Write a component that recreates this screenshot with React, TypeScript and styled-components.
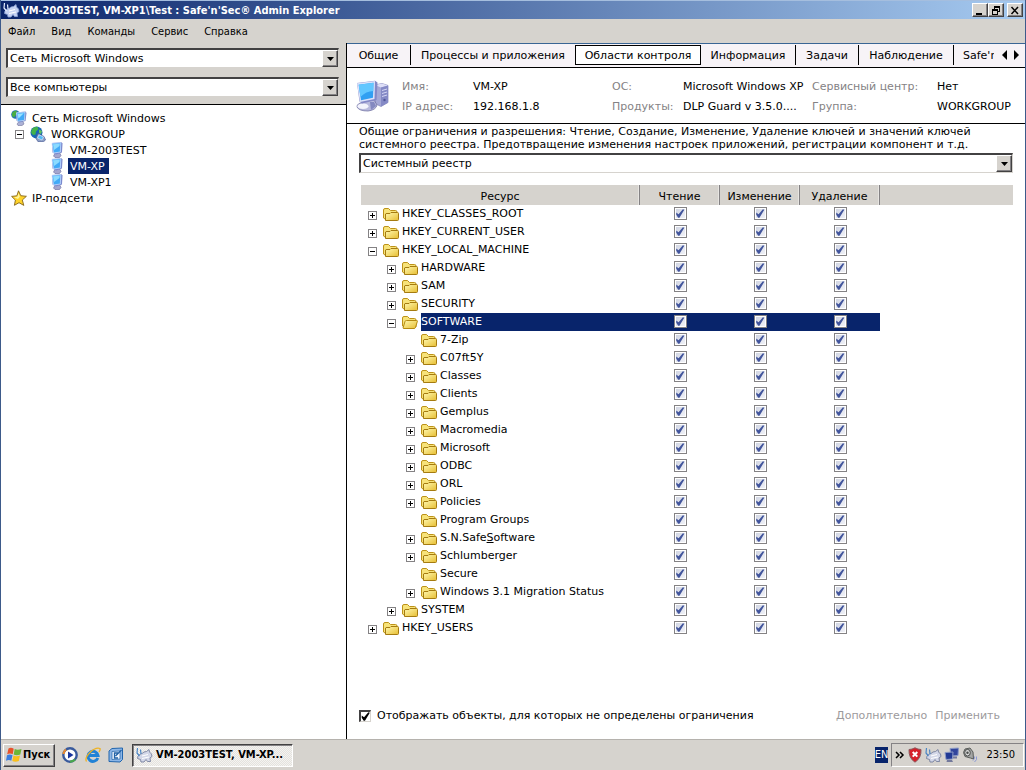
import React from "react";
import styled, { createGlobalStyle, css } from "styled-components";

const face = "#d6d3ce";
const navy = "#08246b";
const wide = '"DejaVu Sans", Verdana, sans-serif';
const narrow = '"DejaVu Sans Condensed", "DejaVu Sans", Tahoma, sans-serif';

const GlobalStyle = createGlobalStyle`
  *, *::before, *::after { box-sizing: border-box; }
  body { margin: 0; background: #fff; color: #000; font: 11px/16px ${wide}; }
  button, input, select { font: inherit; color: inherit; margin: 0; padding: 0; border: 0; border-radius: 0; background: none; }
  ul { list-style: none; margin: 0; padding: 0; }
  svg { display: block; flex: none; }
`;

const raised = css`
  background: ${face};
  border: 1px solid;
  border-color: #fff #424142 #424142 #fff;
  box-shadow: inset -1px -1px 0 #848284;
`;

const Desktop = styled.div`
  display: flex;
  flex-direction: column;
  min-height: 100vh;
  border: solid #3d5a8a;
  border-width: 0 1px;
  background: ${face};
`;

/* ---- window frame ---- */

const TitleBar = styled.header`
  display: flex;
  align-items: center;
  gap: 1px;
  height: 19px;
  padding: 0 2px;
  border-top: 1px solid #a5bede;
  background: linear-gradient(to right, #0a246a, #a6caf0);
  color: #fff;
`;

const Title = styled.h1`
  flex: 1;
  margin: 0;
  padding-top: 2px;
  font: bold 11px/16px ${narrow};
  white-space: nowrap;
  overflow: hidden;
`;

const WindowButton = styled.button<{ $apart?: boolean }>`
  ${raised}
  display: grid;
  place-items: center;
  width: 16px;
  height: 14px;
  margin-left: ${(p) => (p.$apart ? 2 : -1)}px;
`;

const MenuBar = styled.nav`
  display: flex;
  gap: 16px;
  height: 24px;
  padding: 2px 7px 0;
  font-family: ${narrow};
`;

const MenuItem = styled.button`
  height: 22px;
`;

const Body = styled.div`
  display: flex;
  flex: 1;
  background: #fff;
  border-bottom: 1px solid #b5b2ad;
`;

/* ---- drop-downs ---- */

const SelectBox = styled.div`
  display: flex;
  height: 20px;
  border: solid;
  border-width: 2px 1px 1px 2px;
  border-color: #424142 #d6d3ce #d6d3ce #424142;
  background: #fff;
`;

const Select = styled.select`
  flex: 1;
  min-width: 0;
  appearance: none;
  padding: 1px 0 0 2px;
  outline: none;
`;

const SelectArrow = styled.span`
  ${raised}
  display: grid;
  place-items: center;
  width: 16px;
`;

/* ---- left side ---- */

const Sidebar = styled.aside`
  display: flex;
  flex-direction: column;
  width: 346px;
  border-right: 1px solid #000;
`;

const Filters = styled.div`
  display: flex;
  flex-direction: column;
  gap: 9px;
  height: 62px;
  padding: 5px 7px 0 5px;
  background: ${face};
  border-bottom: 1px solid #000;
`;

const NetworkTree = styled.ul`
  padding: 5px 10px;
`;

const NetworkRow = styled.li<{ $indent: number }>`
  display: flex;
  align-items: center;
  gap: 3px;
  height: 16px;
  padding-left: ${(p) => p.$indent}px;
`;

const NetworkLabel = styled.span<{ $selected?: boolean }>`
  height: 16px;
  padding: 1px 4px 0 2px;
  background: ${(p) => (p.$selected ? navy : "transparent")};
  color: ${(p) => (p.$selected ? "#fff" : "#000")};
`;

const Expander = styled.button`
  flex: none;
  width: 9px;
  height: 9px;
  margin-right: 3px;
`;

/* ---- right side ---- */

const Main = styled.main`
  display: flex;
  flex-direction: column;
  flex: 1;
  min-width: 0;
`;

const TabBar = styled.div`
  display: flex;
  height: 25px;
  padding: 1px 0 2px;
  background: #f7f3f7;
  border-top: 1px solid #396594;
  border-bottom: 1px solid #000;
`;

const Tab = styled.button<{ $width: number; $active?: boolean; $plain?: boolean }>`
  flex: none;
  width: ${(p) => p.$width}px;
  padding-top: 1px;
  white-space: nowrap;
  border-right: ${(p) => (p.$plain ? 0 : 1)}px solid #000;
  ${(p) =>
    p.$active &&
    css`
      border: 1px solid #000;
      background: #fff;
    `}
`;

const ClippedTab = styled.button`
  flex: 1;
  min-width: 0;
  margin-left: 9px;
  padding-top: 1px;
  text-align: left;
  white-space: nowrap;
  overflow: hidden;
`;

const TabScroller = styled.div`
  display: flex;
  align-items: center;
  gap: 5px;
  padding: 0 5px 0 7px;
`;

const Info = styled.section`
  display: flex;
  align-items: center;
  gap: 13px;
  height: 56px;
  padding: 0 10px 0 9px;
  border-bottom: 1px solid #000;
`;

const InfoGrid = styled.dl`
  display: grid;
  grid-template-columns: 71px 139fr 71px 129fr 125px 78px;
  grid-auto-rows: 20px;
  flex: 1;
  margin: 0;
  line-height: 22px;
  white-space: nowrap;
`;

const InfoLabel = styled.dt`
  color: #848284;
`;

const InfoValue = styled.dd`
  margin: 0;
`;

const Content = styled.section`
  display: flex;
  flex-direction: column;
  flex: 1;
  padding: 1px 12px 15px;
`;

const Description = styled.p`
  margin: 0 0 2px;
  line-height: 13px;
`;

const Table = styled.table`
  width: calc(100% - 2px);
  margin: 12px 0 0 2px;
  table-layout: fixed;
  border-collapse: separate;
  border-spacing: 0;
`;

const HeadCell = styled.th<{ $width?: number }>`
  width: ${(p) => (p.$width ? `${p.$width}px` : "auto")};
  height: 20px;
  padding: 3px 0 0;
  font-weight: normal;
  background: ${face};
  border-right: ${(p) => (p.$width ? "1px solid #848284" : "0")};
  box-shadow: ${(p) => (p.$width ? "inset -1px 0 0 #e7e5e2" : "none")};
`;

const Cell = styled.td<{ $selected?: boolean }>`
  height: 18px;
  padding: 0;
  background: ${(p) => (p.$selected ? navy : "transparent")};
`;

const Resource = styled.div<{ $level: number }>`
  display: flex;
  align-items: center;
  height: 18px;
  padding-left: ${(p) => 7 + p.$level * 19}px;
`;

const ExpanderSlot = styled.span`
  display: flex;
  align-items: flex-end;
  width: 15px;
  height: 12px;
`;

const ResourceLabel = styled.span<{ $selected?: boolean }>`
  flex: 1;
  height: 18px;
  margin-left: 3px;
  padding-top: 1px;
  white-space: nowrap;
  background: ${(p) => (p.$selected ? navy : "transparent")};
  color: ${(p) => (p.$selected ? "#fff" : "#000")};
`;

const Check = styled.input.attrs({ type: "checkbox" })<{ $sunken?: boolean }>`
  display: block;
  flex: none;
  appearance: none;
  width: ${(p) => (p.$sunken ? 12 : 13)}px;
  height: ${(p) => (p.$sunken ? 12 : 13)}px;
  margin: ${(p) => (p.$sunken ? "0" : "0 auto")};
  border: 1px solid #848284;
  background: linear-gradient(135deg, #cdd2e0, #f4f5fa);
  box-shadow: inset 0 0 0 1px #fff;
  ${(p) =>
    p.$sunken &&
    css`
      border-width: 2px 1px 1px 2px;
      border-color: #424142 #d6d3ce #d6d3ce #424142;
      background: #fff;
    `}

  &:checked::after {
    content: "";
    display: block;
    width: 9px;
    height: 9px;
    margin: ${(p) => (p.$sunken ? "0" : "1px")};
    background: ${(p) => (p.$sunken ? "#000" : "#42559c")};
    clip-path: polygon(8% 38%, 34% 58%, 82% 2%, 98% 8%, 44% 96%, 30% 96%, 8% 64%);
  }
`;

const CheckHolder = styled.div`
  height: 18px;
  padding-top: 2px;
`;

const Footer = styled.div`
  display: flex;
  align-items: center;
  gap: 8px;
  margin-top: auto;
  padding-right: 13px;
`;

const ShowAll = styled.label`
  display: flex;
  align-items: center;
  gap: 6px;
  flex: 1;
`;

const FlatButton = styled.button`
  color: #9c9a9c;
`;

/* ---- taskbar ---- */

const Taskbar = styled.footer`
  display: flex;
  align-items: center;
  height: 30px;
  padding: 0 1px 0 2px;
  font-family: ${narrow};
`;

const StartButton = styled.button`
  ${raised}
  display: flex;
  align-items: center;
  gap: 1px;
  width: 52px;
  height: 23px;
  padding-left: 2px;
  font: bold 11px/16px ${narrow};
`;

const QuickLaunch = styled.div`
  display: flex;
  gap: 7px;
  padding: 0 8px 0 7px;
`;

const TaskButton = styled.button`
  display: flex;
  align-items: center;
  gap: 3px;
  width: 161px;
  height: 23px;
  padding-left: 3px;
  border: 1px solid;
  border-color: #424142 #fff #fff #424142;
  box-shadow: inset 1px 1px 0 #848284;
  background: repeating-conic-gradient(#e4e2de 0 25%, #f4f3f1 0 50%) 0 0 / 2px 2px;
  font: bold 11px/16px ${narrow};
  white-space: nowrap;
`;

const Language = styled.span`
  margin: 0 3px 0 auto;
  background: ${navy};
  color: #fff;
`;

const Tray = styled.div`
  display: flex;
  align-items: center;
  gap: 2px;
  height: 24px;
  padding: 0 8px 0 3px;
  border: 1px solid;
  border-color: #848284 #fff #fff #848284;
`;

const Clock = styled.time`
  margin-left: 6px;
`;

/* ---- drawings ---- */

const PlusMinus = ({ open }: { open?: boolean }) => (
  <svg width="9" height="9" viewBox="0 0 9 9" shapeRendering="crispEdges">
    <rect x="0.5" y="0.5" width="8" height="8" fill="#fff" stroke="#848284" />
    <path d={open ? "M2 4.5h5" : "M2 4.5h5M4.5 2v5"} stroke="#000" />
  </svg>
);

const DownArrow = () => (
  <svg width="7" height="4" viewBox="0 0 7 4">
    <path d="M0 0h7L3.5 4z" />
  </svg>
);

const Folder = ({ open }: { open?: boolean }) => (
  <svg width="16" height="16" viewBox="0 0 16 16">
    <defs>
      <linearGradient id="folderFront" x1="0" y1="0" x2="1" y2="1">
        <stop offset="0" stopColor="#fff9b0" />
        <stop offset="1" stopColor="#e7bd31" />
      </linearGradient>
    </defs>
    <path d="M.5 12V4Q.5 2.500 2 2.500h3.500L7.500 4.500h5Q14 4.500 14 6v7H2Z" fill="#f7e37a" stroke="#bd9218" />
    {open ? (
      <path d="M1 14 3 7.500Q3.300 6.500 4.500 6.500h10Q15.600 6.500 15.400 7.200L13.500 13.500Q13 14.500 12 14.500H2Q1 14.500 1 14Z" fill="url(#folderFront)" stroke="#b58a10" />
    ) : (
      <path d="M2.500 14.500V8Q2.500 7.500 4 7.500h3l1-1h6.500q1 0 1 1v6q0 1-1 1Z" fill="url(#folderFront)" stroke="#a57b10" />
    )}
  </svg>
);

const Monitor = () => (
  <svg width="16" height="16" viewBox="0 0 16 16">
    <path d="M6.500 10.500h4l1.500 3-1.500 2H6L4.500 14Z" fill="#a5a6ce" stroke="#63659c" strokeWidth=".6" />
    <path d="M3 1 12.500 .3 13.500 1.500 13 10.500 7 12.500 3.500 10.500Z" fill="#7b8ace" />
    <path d="M3 1.300 11.800 .8 11.300 10 4.500 11Z" fill="#42aaf7" stroke="#c6dbff" strokeWidth=".8" />
    <path d="M4 2.200 10.800 1.800 10.500 4 5 8Z" fill="#8cdbff" />
  </svg>
);

const NetworkRoot = () => (
  <svg width="16" height="16" viewBox="0 0 16 16">
    <circle cx="4.500" cy="4.500" r="4.300" fill="#2171b5" />
    <path d="M1 3Q3 0 6 .8L5.500 4 3 7.500 1 6Z" fill="#4aae42" />
    <path d="M8 11.500h4l1 2.500-2 1.500H7L6 14Z" fill="#adb2d6" stroke="#73759c" strokeWidth=".6" />
    <path d="M5 2.500 14.500 1.500 15.500 3 14.500 11 8 12.500 5.500 10.500Z" fill="#7386c6" />
    <path d="M5.500 2.800 14 2 13.500 10.300 6.500 11.300Z" fill="#42aaf7" stroke="#d6e3ff" strokeWidth=".7" />
    <path d="M6.500 3.700 12.800 3.200 7.500 8.500Z" fill="#9ce3ff" />
  </svg>
);

const Globe = () => (
  <svg width="16" height="16" viewBox="0 0 16 16">
    <circle cx="6.500" cy="6.500" r="6" fill="#1865b5" />
    <path d="M2 3Q4 .5 7.500.8L8.500 3 6 5.500 5.500 8.500 3 9 1 6.500Z" fill="#42b24a" />
    <path d="M9 3.500 12 5 11 8 9 7Z" fill="#63c35a" />
    <path d="M6 12.500 8 7.500l6 3 1.500 3.500-2 1.700H8Z" fill="#8c9ec6" stroke="#4a5d95" strokeWidth=".7" />
    <path d="M7.500 12 9 8.800 13.500 11 12 14Z" fill="#52baf7" stroke="#e7efff" strokeWidth=".6" />
  </svg>
);

const Star = () => (
  <svg width="16" height="16" viewBox="0 0 16 16">
    <path d="M7.500.8 9.800 5.700 15.400 6.300 11.300 10 12.800 15.400 8 12.700 3.400 15.300 4.400 10.100.600 6.400 5.900 5.800Z" fill="#ffd329" stroke="#84651a" strokeWidth=".9" />
    <path d="M7.500 3 8.900 6.700 7 9 3 7.200 6.400 6.700Z" fill="#fff59c" />
  </svg>
);

const ComputerLarge = () => (
  <svg width="33" height="32" viewBox="0 0 33 32">
    <path d="M19 5 26 3.500 32 5.500v17l-7 4-6-3Z" fill="#a5a8d6" stroke="#7b7fb8" strokeWidth=".7" />
    <path d="m19 5 7-1.500 6 2L25 7.500Z" fill="#dedff7" />
    <path d="M25 7.500 32 5.500v17l-7 4Z" fill="#858ac6" />
    <path d="M26 10.500 31 9M26 13.500 31 12M26 16.500 31 15" stroke="#d5d7f5" />
    <circle cx="28.500" cy="20" r="1.200" fill="#4f5699" />
    <path d="M10 20h8l3 5q-1 5-9 6-9 0-11-4 0-4 6-4.500Z" fill="#b9badd" stroke="#7375a5" strokeWidth=".8" />
    <ellipse cx="7" cy="26.300" rx="5.500" ry="2.800" fill="#f4f4fc" />
    <path d="M14 22h4l2 4-5 4Z" fill="#8489c0" />
    <path d="M1 3 19 .7 21.500 2.500 20.500 20 6 23.500 3.500 21.500Z" fill="#8488c6" />
    <path d="M1 3.200 19 1 18.500 19 4 22Z" fill="#dbe2fb" />
    <path d="M2.700 4.700 17.500 2.800 17 17.700 5 20.300Z" fill="#319ff2" />
    <path d="M2.700 4.700 17.500 2.800 17.300 11Q10 11 4.400 17Z" fill="#63c7ff" />
  </svg>
);

const Rhino = ({ light }: { light?: boolean }) => (
  <svg width="17" height="16" viewBox="0 0 17 16">
    <path
      d="M3.500 7.500 6 6.500 8 5 10.500 4.500 13 2.500 13.500 5 15.500 7 16 9.500 14 11 14.500 14.500H11.500L10 12.500 8 15H5L4.500 12.500 1.500 11.500 2 9Z"
      fill={light ? "#c6d3f2" : "#d3d7e8"}
      stroke={light ? "#8ca2d6" : "#6b7594"}
      strokeWidth=".8"
    />
    <path d="M6 9 12 7.500M6 11.500 13 10" stroke="#fff" />
    <path d="M1.500 1 1 6 3.500 9M4.500 2.500 5 7" fill="none" stroke={light ? "#e7efff" : "#4a86c6"} strokeWidth="1.200" />
  </svg>
);

const WindowsFlag = () => (
  <svg width="16" height="16" viewBox="0 0 16 16">
    <path d="M2.500 1.500Q5 0 7.700 1.700L6.700 7.200Q4 5.700 1.200 7.200Z" fill="#e7512a" />
    <path d="M8.700 2Q11.500 3.500 15.500 2L14.300 7.500Q10.500 9 7.700 7.500Z" fill="#6bb637" />
    <path d="M1 8.200Q4 6.700 6.500 8.200L5.300 13.700Q2.800 12.500 0 13.800Z" fill="#3a7de0" />
    <path d="M7.500 8.600Q10.500 10 14 8.500L12.800 14Q9.300 15.500 6.300 14Z" fill="#f9bf1c" />
  </svg>
);

const MediaPlayer = () => (
  <svg width="16" height="16" viewBox="0 0 16 16">
    <circle cx="8" cy="8" r="6.700" fill="#fff" stroke="#395a9c" strokeWidth="2.400" />
    <path d="M1.500 7A6.600 6.600 0 0 1 4 2.500" fill="none" stroke="#e78a31" strokeWidth="2.200" />
    <path d="M13 12.500A6.500 6.500 0 0 1 8 14.600" fill="none" stroke="#4aa84a" strokeWidth="2.200" />
    <path d="M6 4.500 11.500 8 6 11.500Z" fill="#18349c" />
  </svg>
);

const Explorer = () => (
  <svg width="16" height="16" viewBox="0 0 16 16">
    <path d="M12.800 11A5 5 0 1 1 13 8.500H4.500" fill="none" stroke="#2182d6" strokeWidth="3" />
    <path d="M1.500 14.500Q-.5 11 5 5.500T15 1.500Q15.500 3 14 5" fill="none" stroke="#efb221" strokeWidth="1.300" />
  </svg>
);

const ShowDesktop = () => (
  <svg width="16" height="16" viewBox="0 0 16 16">
    <path d="M1 4 4 1.500 14.500 1v11.500L12 15 1 14.500Z" fill="#8cb6e7" stroke="#2165ad" />
    <path d="M4 4.500 12 4v8L4 12.500Z" fill="#f3f8ff" stroke="#316dad" strokeWidth=".8" />
    <path d="M10 6H6.500V11H10M7.500 9 13.500 3" fill="none" stroke="#2161a5" strokeWidth="1.300" />
  </svg>
);

const Shield = () => (
  <svg width="16" height="16" viewBox="0 0 16 16">
    <path d="M8 .8Q11 2.500 14 2.500 14.500 11 8 15.200 1.500 11 2 2.500 5 2.500 8 .8Z" fill="#d6202a" stroke="#8c5a5e" />
    <path d="M5.700 5 10.300 9.600M10.300 5 5.700 9.600" stroke="#fff" strokeWidth="2" />
  </svg>
);

const NetworkTray = () => (
  <svg width="16" height="16" viewBox="0 0 16 16">
    <path d="M6 1.500 14.500 1 14 8.500 7 9Z" fill="#31459c" stroke="#8c9ac6" />
    <path d="M9 9.500h4v2H9Z" fill="#73799c" />
    <path d="M1 5.500 9 5 8.500 12 2 12.500Z" fill="#213994" stroke="#8c9ac6" />
    <path d="M3 13h5l1 2H2.500Z" fill="#73799c" />
  </svg>
);

const Speaker = () => (
  <svg width="16" height="16" viewBox="0 0 16 16">
    <path d="M3 2 8 1 11 5 11.500 12 8.500 11 3 9.500 1.500 5.500Z" fill="#a5a6a5" stroke="#5a5d5a" />
    <ellipse cx="5.500" cy="5.700" rx="2.800" ry="3.300" fill="#d6d7d6" stroke="#4a4d4a" />
    <circle cx="5.500" cy="5.700" r="1.200" fill="#4a4d4a" />
    <path d="M12.500 9.500Q13 11.500 11 13.500M14.500 9.500Q15.500 13 12.500 15" fill="none" stroke="#8c9ad6" />
  </svg>
);

/* ---- data ---- */

type Item = { name: React.ReactNode; key: string; level: number; state: "closed" | "open" | "leaf"; selected?: boolean };

const item = (key: string, level: number, state: Item["state"] = "closed", selected = false): Item => ({
  key,
  name: key,
  level,
  state,
  selected,
});

const items: Item[] = [
  item("HKEY_CLASSES_ROOT", 0),
  item("HKEY_CURRENT_USER", 0),
  item("HKEY_LOCAL_MACHINE", 0, "open"),
  item("HARDWARE", 1),
  item("SAM", 1),
  item("SECURITY", 1),
  item("SOFTWARE", 1, "open", true),
  item("7-Zip", 2, "leaf"),
  item("C07ft5Y", 2),
  item("Classes", 2),
  item("Clients", 2),
  item("Gemplus", 2),
  item("Macromedia", 2),
  item("Microsoft", 2),
  item("ODBC", 2),
  item("ORL", 2),
  item("Policies", 2),
  item("Program Groups", 2, "leaf"),
  { key: "S.N.SafeSoftware", name: <>S.N.Safe<u>S</u>oftware</>, level: 2, state: "closed" },
  item("Schlumberger", 2),
  item("Secure", 2, "leaf"),
  item("Windows 3.1 Migration Status", 2),
  item("SYSTEM", 1),
  item("HKEY_USERS", 0),
];

const rights = ["Чтение", "Изменение", "Удаление"];

function DropDown({ label, value }: { label: string; value: string }) {
  return (
    <SelectBox>
      <Select aria-label={label} defaultValue={value}>
        <option>{value}</option>
      </Select>
      <SelectArrow>
        <DownArrow />
      </SelectArrow>
    </SelectBox>
  );
}

export default function App() {
  return (
    <Desktop>
      <GlobalStyle />
      <TitleBar>
        <Rhino light />
        <Title>VM-2003TEST, VM-XP1\Test : Safe'n'Sec® Admin Explorer</Title>
        <WindowButton aria-label="Свернуть">
          <svg width="10" height="9" viewBox="0 0 10 9"><path d="M1 7h6v2H1z" /></svg>
        </WindowButton>
        <WindowButton aria-label="Восстановить">
          <svg width="10" height="9" viewBox="0 0 10 9" shapeRendering="crispEdges">
            <path d="M3 0h6v6H7V5h1V2H4v1H3zM1 3h6v6H1zM2 5v3h4V5z" fillRule="evenodd" />
          </svg>
        </WindowButton>
        <WindowButton $apart aria-label="Закрыть">
          <svg width="10" height="9" viewBox="0 0 10 9"><path d="M1.500 1 8 8M8 1 1.500 8" stroke="#000" strokeWidth="1.500" /></svg>
        </WindowButton>
      </TitleBar>
      <MenuBar>
        {["Файл", "Вид", "Команды", "Сервис", "Справка"].map((m) => (
          <MenuItem key={m}>{m}</MenuItem>
        ))}
      </MenuBar>
      <Body>
        <Sidebar>
          <Filters>
            <DropDown label="Сеть" value="Сеть Microsoft Windows" />
            <DropDown label="Компьютеры" value="Все компьютеры" />
          </Filters>
          <NetworkTree>
            <NetworkRow $indent={0}><NetworkRoot /><NetworkLabel>Сеть Microsoft Windows</NetworkLabel></NetworkRow>
            <NetworkRow $indent={4}>
              <Expander aria-label="WORKGROUP"><PlusMinus open /></Expander>
              <Globe /><NetworkLabel>WORKGROUP</NetworkLabel>
            </NetworkRow>
            <NetworkRow $indent={38}><Monitor /><NetworkLabel>VM-2003TEST</NetworkLabel></NetworkRow>
            <NetworkRow $indent={38}><Monitor /><NetworkLabel $selected>VM-XP</NetworkLabel></NetworkRow>
            <NetworkRow $indent={38}><Monitor /><NetworkLabel>VM-XP1</NetworkLabel></NetworkRow>
            <NetworkRow $indent={0}><Star /><NetworkLabel>IP-подсети</NetworkLabel></NetworkRow>
          </NetworkTree>
        </Sidebar>
        <Main>
          <TabBar>
            <Tab $width={64}>Общие</Tab>
            <Tab $width={164} $plain>Процессы и приложения</Tab>
            <Tab $width={126} $active>Области контроля</Tab>
            <Tab $width={95}>Информация</Tab>
            <Tab $width={63}>Задачи</Tab>
            <Tab $width={95}>Наблюдение</Tab>
            <ClippedTab>Safe'n'Sec</ClippedTab>
            <TabScroller>
              <button aria-label="Назад"><svg width="7" height="10" viewBox="0 0 7 10"><path d="M6 0v10L1 5z" /></svg></button>
              <button aria-label="Вперёд"><svg width="7" height="10" viewBox="0 0 7 10"><path d="M1 0v10l5-5z" /></svg></button>
            </TabScroller>
          </TabBar>
          <Info>
            <ComputerLarge />
            <InfoGrid>
              <InfoLabel>Имя:</InfoLabel><InfoValue>VM-XP</InfoValue>
              <InfoLabel>ОС:</InfoLabel><InfoValue>Microsoft Windows XP</InfoValue>
              <InfoLabel>Сервисный центр:</InfoLabel><InfoValue>Нет</InfoValue>
              <InfoLabel>IP адрес:</InfoLabel><InfoValue>192.168.1.8</InfoValue>
              <InfoLabel>Продукты:</InfoLabel><InfoValue>DLP Guard v 3.5.0....</InfoValue>
              <InfoLabel>Группа:</InfoLabel><InfoValue>WORKGROUP</InfoValue>
            </InfoGrid>
          </Info>
          <Content>
            <Description>
              Общие ограничения и разрешения: Чтение, Создание, Изменение, Удаление ключей и значений ключей
              системного реестра. Предотвращение изменения настроек приложений, регистрации компонент и т.д.
            </Description>
            <DropDown label="Область контроля" value="Системный реестр" />
            <Table>
              <thead>
                <tr>
                  <HeadCell $width={279}>Ресурс</HeadCell>
                  {rights.map((r) => <HeadCell key={r} $width={80}>{r}</HeadCell>)}
                  <HeadCell />
                </tr>
              </thead>
              <tbody>
                {items.map((it) => (
                  <tr key={it.key}>
                    <Cell>
                      <Resource $level={it.level}>
                        <ExpanderSlot>
                          {it.state !== "leaf" && (
                            <Expander aria-label={it.key}><PlusMinus open={it.state === "open"} /></Expander>
                          )}
                        </ExpanderSlot>
                        <Folder open={it.selected} />
                        <ResourceLabel $selected={it.selected}>{it.name}</ResourceLabel>
                      </Resource>
                    </Cell>
                    {rights.map((r) => (
                      <Cell key={r} $selected={it.selected}>
                        <CheckHolder>
                          <Check defaultChecked aria-label={`${it.key}: ${r}`} />
                        </CheckHolder>
                      </Cell>
                    ))}
                    <Cell />
                  </tr>
                ))}
              </tbody>
            </Table>
            <Footer>
              <ShowAll>
                <Check $sunken defaultChecked />
                Отображать объекты, для которых не определены ограничения
              </ShowAll>
              <FlatButton>Дополнительно</FlatButton>
              <FlatButton>Применить</FlatButton>
            </Footer>
          </Content>
        </Main>
      </Body>
      <Taskbar>
        <StartButton><WindowsFlag />Пуск</StartButton>
        <QuickLaunch><MediaPlayer /><Explorer /><ShowDesktop /></QuickLaunch>
        <TaskButton><Rhino />VM-2003TEST, VM-XP...</TaskButton>
        <Language>EN</Language>
        <Tray>
          <svg width="10" height="8" viewBox="0 0 10 8"><path d="M1 1 4 4 1 7M5 1 8 4 5 7" fill="none" stroke="#000" strokeWidth="1.500" /></svg>
          <Shield /><Rhino /><NetworkTray /><Speaker />
          <Clock>23:50</Clock>
        </Tray>
      </Taskbar>
    </Desktop>
  );
}
